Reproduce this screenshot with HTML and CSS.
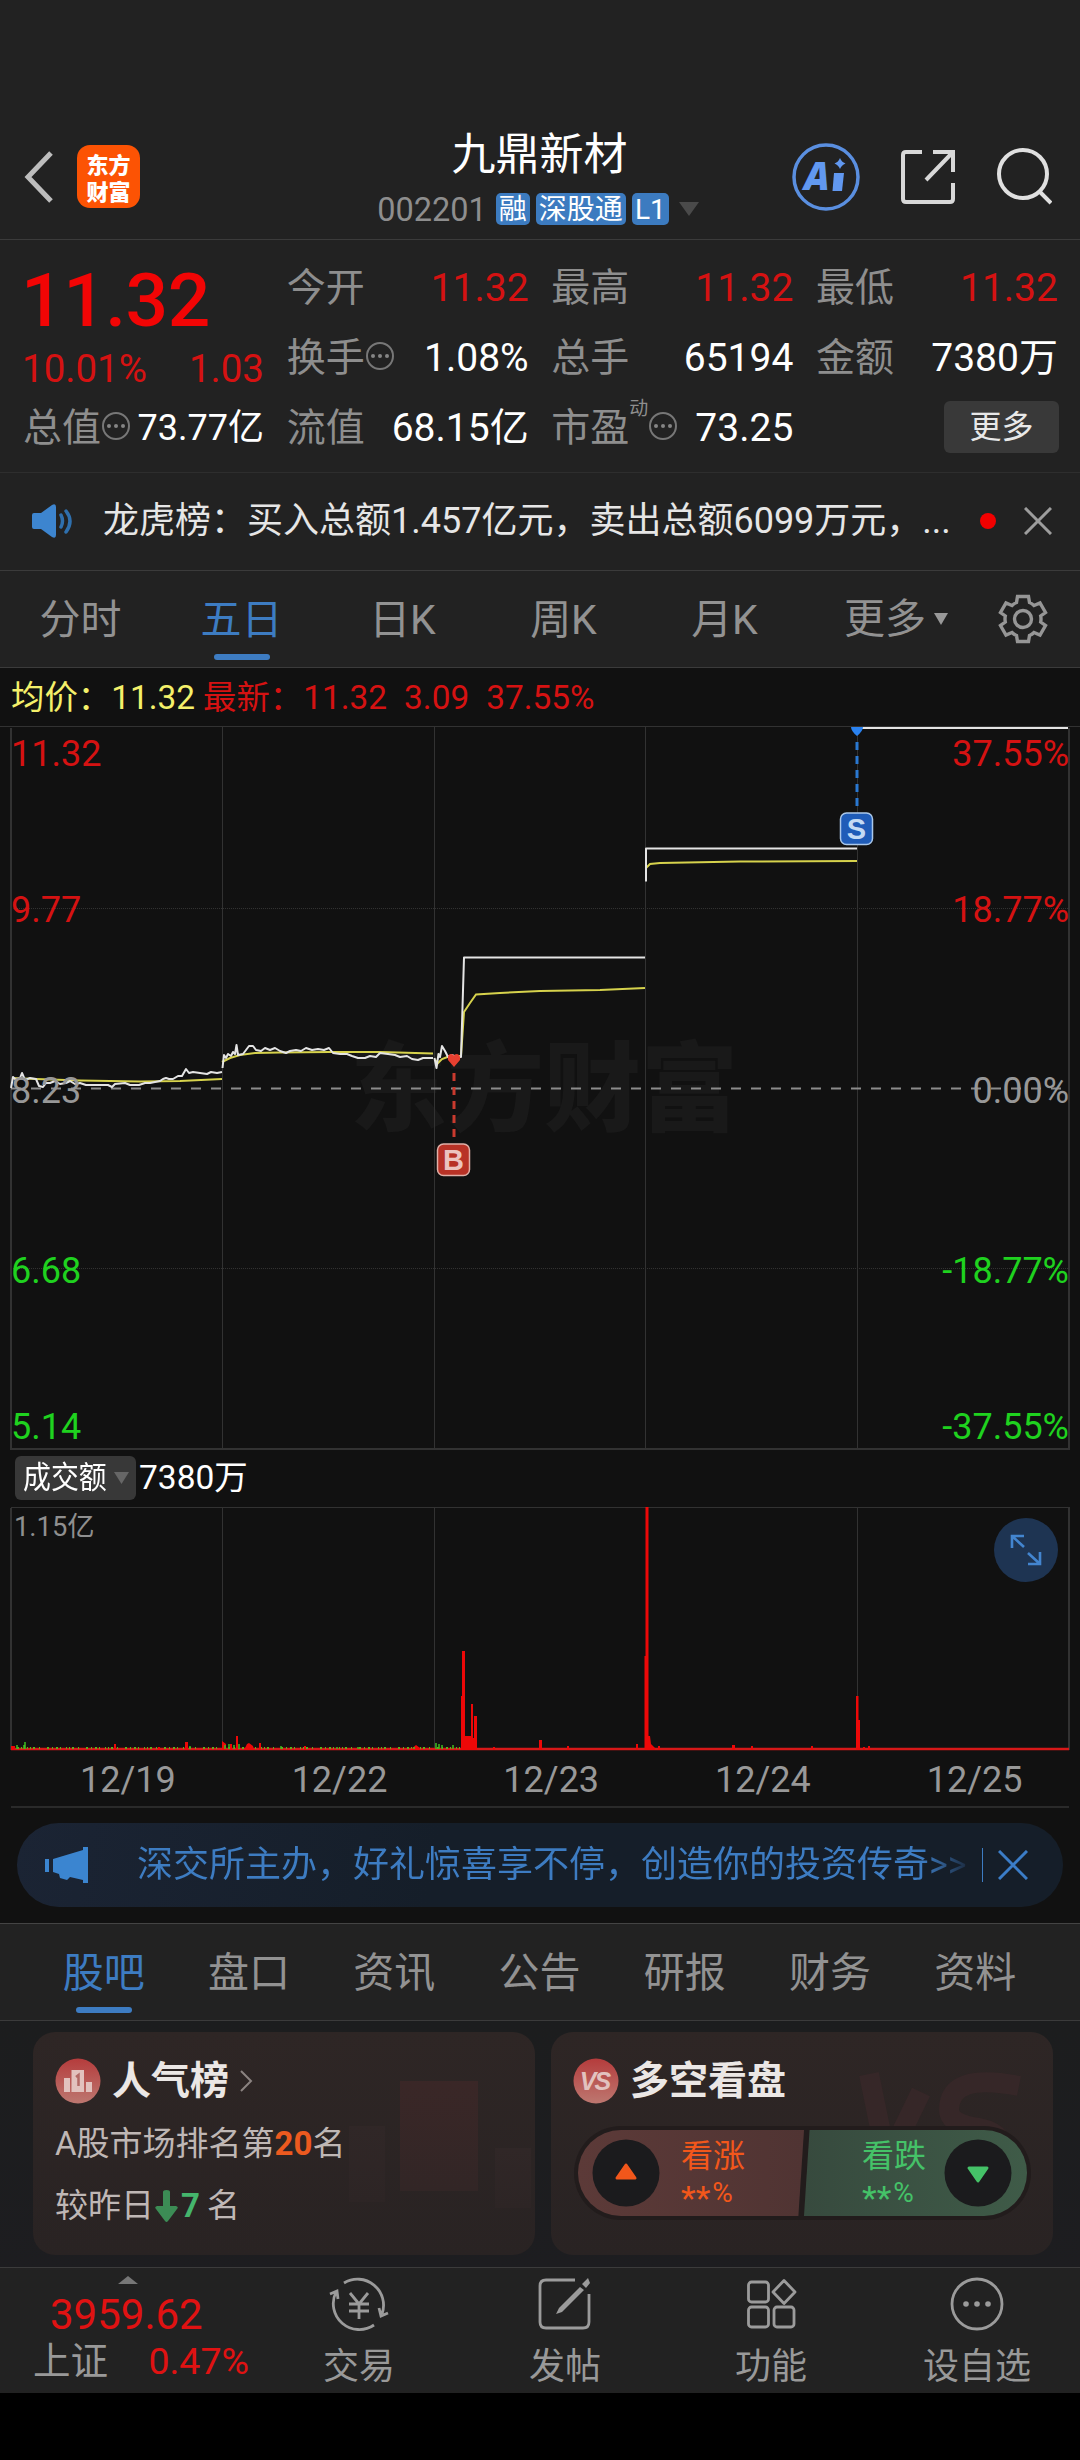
FILE: index.html
```html
<!DOCTYPE html>
<html lang="zh-CN">
<head>
<meta charset="utf-8">
<title>九鼎新材 002201</title>
<link rel="stylesheet" href="styles.css">
</head>
<body>
<div class="app">
  <header class="header">
    <div class="header-left">
      <svg class="back" width="32" height="54" viewBox="0 0 32 54"><path d="M28 3 5 27 28 51" fill="none" stroke="#bdbdbd" stroke-width="5"/></svg>
      <div class="logo"><span>东方</span><span>财富</span></div>
    </div>
    <div class="header-title">
      <h1>九鼎新材</h1>
      <div class="code-row">
        <span class="code">002201</span>
        <span class="tag tag-one">融</span>
        <span class="tag tag-three">深股通</span>
        <span class="tag tag-level">L1</span>
        <svg class="code-arrow" width="20" height="14" viewBox="0 0 20 14"><path d="M0 0H20L10 14Z" fill="#4a4a4a"/></svg>
      </div>
    </div>
    <div class="header-actions">
      <svg width="68" height="68" viewBox="0 0 68 68"><circle cx="34" cy="34" r="32" fill="none" stroke="#5a8fe0" stroke-width="3.5"/><text class="ai-text" x="12" y="47">A</text><path d="M42 30h10l-2 18h-9.500z" fill="#6198f0"/><path d="M48 15q1.500 4 5.500 5.500-4 1.500-5.500 5.500-1.500-4-5.500-5.500 4-1.500 5.500-5.500z" fill="#6198f0"/></svg>
      <svg width="56" height="56" viewBox="0 0 56 56" fill="none" stroke="#d8d8d8" stroke-width="4"><path d="M22 3H6Q3 3 3 6V50Q3 53 6 53H50Q53 53 53 50V34M33 3H53V23M53 3 26 31"/></svg>
      <svg width="56" height="58" viewBox="0 0 56 58" fill="none" stroke="#e0e0e0" stroke-width="4"><circle cx="27" cy="26" r="24"/><path d="M43 43 55 55"/></svg>
    </div>
  </header>

  <section class="quote">
    <div class="quote-main">
      <div class="price">11.32</div>
      <div class="change"><span>10.01%</span><span>1.03</span></div>
      <div class="cell"><span class="label">总值<i class="info"><b></b><b></b><b></b></i></span><span class="fit">73.77亿</span></div>
    </div>
    <div class="quote-col">
      <div class="cell"><span class="label">今开</span><span class="up">11.32</span></div>
      <div class="cell"><span class="label">换手<i class="info"><b></b><b></b><b></b></i></span><span>1.08%</span></div>
      <div class="cell"><span class="label">流值</span><span>68.15亿</span></div>
    </div>
    <div class="quote-col">
      <div class="cell"><span class="label">最高</span><span class="up">11.32</span></div>
      <div class="cell"><span class="label">总手</span><span>65194</span></div>
      <div class="cell"><span class="label">市盈<sup>动</sup><i class="info"><b></b><b></b><b></b></i></span><span>73.25</span></div>
    </div>
    <div class="quote-col">
      <div class="cell"><span class="label">最低</span><span class="up">11.32</span></div>
      <div class="cell"><span class="label">金额</span><span>7380万</span></div>
      <div class="cell cell-end"><button class="more">更多</button></div>
    </div>
  </section>

  <section class="news">
    <svg width="42" height="34" viewBox="0 0 42 34"><path d="M0 11Q0 9 2 9H9L20 1Q24-1 24 3V31Q24 35 20 33L9 25H2Q0 25 0 23Z" fill="#3d85cf"/><path d="M29 11Q32 17 29 23M34 7Q42 17 34 28" fill="none" stroke="#2f70ae" stroke-width="3.500" stroke-linecap="round"/></svg>
    <p>龙虎榜：买入总额1.457亿元，卖出总额6099万元，...</p>
    <i class="dot"></i>
    <svg width="28" height="28" viewBox="0 0 28 28"><path d="M1 1 27 27M27 1 1 27" stroke="#9d9d9d" stroke-width="3"/></svg>
  </section>

  <nav class="periods">
    <span>分时</span><span class="active">五日</span><span>日K</span><span>周K</span><span>月K</span>
    <span class="period-more">更多<svg width="14" height="12" viewBox="0 0 14 12"><path d="M0 0H14L7 12Z" fill="#999"/></svg></span>
    <svg class="gear" width="50" height="50" viewBox="-25 -25 50 50" fill="none" stroke="#969696" stroke-width="3.400"><path d="M-5.500-22.500H5.500L6.500-16.500Q9-15.500 11-13.500L17-16 22.500-6.500 17.700-3Q18.300 0 17.700 3L22.500 6.500 17 16 11 13.500Q9 15.500 6.500 16.500L5.500 22.500H-5.500L-6.500 16.500Q-9 15.500-11 13.500L-17 16-22.500 6.500-17.700 3Q-18.300 0-17.700-3L-22.500-6.500-17-16-11-13.500Q-9-15.500-6.500-16.500Z"/><circle r="8.500"/></svg>
  </nav>

  <section class="chart">
    <div class="legend"><span class="avg">均价：11.32</span><span>最新：11.32</span><span>3.09</span><span>37.55%</span></div>
    <svg class="price-chart" width="1080" height="725" viewBox="0 726 1080 725">
      <text class="watermark" x="350" y="1123" textLength="388">东方财富</text>
      <g class="grid">
        <path d="M0 726.500H1080"/>
        <path d="M222.500 727V1449M434.500 727V1449M645.500 727V1449M857.500 727V1449"/>
        <path d="M11 728V1450M1069 728V1450M11 1449H1070" stroke-width="2"/>
        <path d="M11 908.500H1069M11 1268.500H1069" stroke-dasharray="1 1"/>
      </g>
      <path d="M11 1088.500H1069" stroke="#8c8c8c" stroke-width="2" stroke-dasharray="10 10"/>
      <g class="avg-line">
        <path d="M12 1078 36 1079 80 1080.500 140 1081.500 180 1081 222 1079"/>
        <path d="M222 1062 230 1058 240 1055 255 1053 280 1052.500 330 1052 380 1052 433 1053.500"/>
        <path d="M435 1060 438 1063 442 1059 450 1056 461 1056 464 1012 470 1003 476 994.500 500 993 540 991 600 990 645 988"/>
        <path d="M646 868 650 864 660 863 740 861.500 857 861"/>
      </g>
      <g class="price-line">
        <path d="M11 1088 13 1077 16 1080 20 1078 22 1073 25 1080 30 1078 36 1079 39 1086 43 1087 46 1083 50 1083 55 1081 60 1084 66 1083 70 1081 75 1084 80 1083 86 1085 95 1085 108 1085 112 1087 115 1084 125 1083 130 1085 139 1085 145 1083 150 1083 155 1082 160 1081 163 1079 166 1078 169 1079 173 1079 178 1076 182 1076 186 1069 189 1073 193 1072 200 1073 207 1074 211 1072 217 1073 222 1072"/>
        <path d="M222.500 1068 224 1055 226 1058 228 1054 231 1056 233 1052 235 1054 236.500 1045 238 1055 243 1054 246 1050 249 1046 253 1046 256 1050 261 1051 265 1048 270 1050 275 1048 280 1051 286 1053 290 1051 296 1050 301 1051 306 1048 312 1050 318 1049 324 1050 329 1048 333 1053 340 1054 347 1054 352 1056 358 1058 365 1058 370 1056 376 1057 380 1053 388 1054 395 1055 400 1057 407 1056 412 1059 418 1060 423 1058 433 1058"/>
        <path d="M434.500 1058 436.500 1068 438.500 1054 440 1057 442 1046 445 1051 448 1057 452 1055 456 1057 461 1057 464 957.500 645 957.500"/>
        <path d="M646 881.500V848.500H857"/>
        <path d="M858 728H1068" stroke-width="2.200"/>
      </g>
      <g class="axis">
        <g class="rise"><text x="11" y="766">11.32</text><text x="11" y="922">9.77</text></g>
        <text x="11" y="1103">8.23</text>
        <g class="fall"><text x="11" y="1283">6.68</text><text x="11" y="1439">5.14</text></g>
        <g text-anchor="end">
          <g class="rise"><text x="1069" y="766">37.55%</text><text x="1069" y="922">18.77%</text></g>
          <text x="1069" y="1103">0.00%</text>
          <g class="fall"><text x="1069" y="1283">-18.77%</text><text x="1069" y="1439">-37.55%</text></g>
        </g>
      </g>
      <path d="M454 1073V1138" stroke="#c93a2e" stroke-width="3" stroke-dasharray="8 6"/>
      <path d="M454 1067 448 1060Q447 1054 451 1054 454 1054 454 1056 454 1054 457 1054 461 1055 460 1060Z" fill="#e84030"/>
      <rect x="437.500" y="1144" width="32" height="31.500" rx="6" fill="#b83226" stroke="#e0b0a8" stroke-width="1.500"/>
      <text class="marker" x="453.500" y="1170">B</text>
      <path d="M857 742V810" stroke="#2a78d0" stroke-width="3" stroke-dasharray="8 6"/>
      <path d="M851 727H863Q863 731 857 736 851 731 851 727Z" fill="#2a82f0"/>
      <rect x="840.500" y="813" width="32" height="31.500" rx="6" fill="#1f5cb8" stroke="#aac8ea" stroke-width="1.500"/>
      <text class="marker marker-sell" x="856.500" y="839">S</text>
    </svg>
    <div class="volume-head">
      <span class="volume-select"><em>成交额</em><svg width="15" height="12" viewBox="0 0 15 12"><path d="M0 0H15L7.500 12Z" fill="#666"/></svg></span>
      <span>7380万</span>
    </div>
    <svg class="volume-chart" width="1080" height="244" viewBox="0 1507 1080 244">
      <g class="grid">
        <path d="M11 1507.500H1070M222.500 1508V1749M434.500 1508V1749M857.500 1508V1749"/>
        <path d="M11 1508V1750M1069 1508V1750" stroke-width="2"/>
      </g>
      <text class="volume-max" x="14" y="1536">1.15亿</text>
      <path d="M11 1749H1069" stroke="#d81818" stroke-width="2.500"/>
      <path d="M13 1748H461" stroke="#5fae1c" stroke-width="2" stroke-dasharray="1 3 2 2 1 5 1 2 1 2 2 4 1 7 2 3"/>
      <path d="M11 1750V1746H15V1750ZM114 1750V1744H116V1750ZM158 1750V1747H160V1750ZM185 1750V1742H188V1750ZM222 1750V1741L226 1744V1750ZM236 1750V1736H238V1750ZM230 1750V1744H232V1750ZM244 1750 247 1744 249 1743 253 1746 254 1750ZM259 1750V1743H261V1750ZM304 1750V1746H306V1750ZM410 1750 416 1745 420 1748V1750ZM461 1750V1696H462V1651H465V1736H471V1704H473V1738H474V1716H477V1750ZM493 1750V1747H495V1750ZM539 1750V1740H542V1750ZM567 1750V1746H569V1750ZM636 1750V1744H638V1750ZM644.500 1750V1656H645.500V1507H648.500V1736H650L651 1744 655 1748V1750ZM658 1750V1746H660V1750ZM732 1750V1745H735V1750ZM751 1750V1746H753V1750ZM811 1750V1746H813V1750ZM856 1750V1696H858.500V1720H860V1750ZM863 1750V1747H865V1750ZM868 1750V1746H870V1750Z" fill="#ed0808"/>
      <path d="M17 1749V1745M24 1749V1745M25 1749V1742M190 1749V1746M225 1749V1745M229 1749V1744M234 1749V1745M239 1749V1744M281 1749V1746M337 1749V1747M358 1749V1747M414 1749V1747M436 1749V1743M439 1749V1744M442 1749V1745M453 1749V1745" stroke="#3fbe20" stroke-width="1.500"/>
      <circle cx="1026" cy="1550" r="32" fill="#1e3452"/>
      <path d="M1012 1548V1536H1024M1012 1536 1024 1547M1040 1552V1564H1028M1040 1564 1028 1553" fill="none" stroke="#4385cf" stroke-width="2.600"/>
    </svg>
    <div class="dates"><span>12/19</span><span>12/22</span><span>12/23</span><span>12/24</span><span>12/25</span></div>
  </section>

  <section class="promo-wrap">
    <div class="promo">
      <svg width="43" height="36" viewBox="0 0 43 36"><path d="M0 12H4V25H0ZM8 12 38 3V0H43V36H38V33L25 30 22 33 15 31 14 27 8 25Z" fill="#3b85d0"/></svg>
      <p>深交所主办，好礼惊喜享不停，创造你的投资传奇&gt;&gt;</p>
      <i></i>
      <svg width="30" height="30" viewBox="0 0 30 30"><path d="M1 1 29 29M29 1 1 29" stroke="#3b7dc8" stroke-width="3"/></svg>
    </div>
  </section>

  <nav class="sections">
    <span class="active">股吧</span><span>盘口</span><span>资讯</span><span>公告</span><span>研报</span><span>财务</span><span>资料</span>
  </nav>

  <section class="cards">
    <article class="card card-rank">
      <h2><svg width="46" height="46" viewBox="0 0 46 46"><defs><linearGradient id="badge" x1="0" y1="0" x2="0" y2="1"><stop offset="0" stop-color="#b53c3c"/><stop offset="1" stop-color="#bd7770"/></linearGradient></defs><circle cx="23" cy="23" r="22.500" fill="url(#badge)"/><path d="M9 20H15V34H9ZM16.500 12H29V34H16.500ZM31 24H37V34H31Z" fill="#e2c2be"/><path d="M21 19 23.500 17V28" fill="none" stroke="#b36a66" stroke-width="2.500"/></svg>人气榜<svg width="13" height="22" viewBox="0 0 13 22"><path d="M1 1 11 11 1 21" fill="none" stroke="#8b8381" stroke-width="2"/></svg></h2>
      <p>A股市场排名第<b class="rank">20</b>名</p>
      <p>较昨日<svg class="drop" width="23" height="32" viewBox="0 0 23 32"><path d="M8 2Q8 0 11.500 0T15 2V16H21Q24 17 22 19L13 31Q11.500 33 10 31L1 19Q-1 17 2 16H8Z" fill="#3c8c55"/></svg><b class="fell">7</b>名</p>
    </article>
    <article class="card card-vote">
      <svg class="card-art" width="180" height="110" viewBox="0 0 180 110" fill="none" stroke="#362728" stroke-width="20"><path d="M10 12 28 100 62 30M160 24Q90 10 90 48 90 62 120 66 150 72 140 96"/></svg>
      <h2><svg width="46" height="46" viewBox="0 0 46 46"><circle cx="23" cy="23" r="22.500" fill="url(#badge)"/><text class="vs" x="21.500" y="32">VS</text></svg>多空看盘</h2>
      <div class="vote">
        <div class="side bull">
          <svg width="68" height="68" viewBox="0 0 68 68"><circle cx="34" cy="34" r="33.500" fill="#1b1b1d"/><path d="M34 26 43 39H25Z" fill="#f2571b" stroke="#f2571b" stroke-width="3" stroke-linejoin="round"/></svg>
          <div><span>看涨</span><small><i>**</i>%</small></div>
        </div>
        <div class="side bear">
          <div><span>看跌</span><small><i>**</i>%</small></div>
          <svg width="68" height="68" viewBox="0 0 68 68"><circle cx="34" cy="34" r="33.500" fill="#1b1b1d"/><path d="M34 42 43 29H25Z" fill="#45c268" stroke="#45c268" stroke-width="3" stroke-linejoin="round"/></svg>
        </div>
      </div>
    </article>
  </section>

  <footer class="bottom">
    <div class="index">
      <svg width="20" height="8" viewBox="0 0 20 8"><path d="M0 8 10 0 20 8Z" fill="#777"/></svg>
      <strong>3959.62</strong>
      <div><span>上证</span><b>0.47%</b></div>
    </div>
    <div class="action"><svg width="60" height="56" viewBox="0 0 60 56" fill="none" stroke="#9b9b9b" stroke-width="2.800"><path d="M15 7A26 26 0 0 1 53 38M45 49A26 26 0 0 1 7 16M1 18 8 15 9 23M59 37 52 40 50 32"/><path d="M21 17 30 28 39 17M30 28V43M20 28H40M20 35H40"/></svg><span>交易</span></div>
    <div class="action"><svg width="60" height="56" viewBox="0 0 60 56"><path d="M40 4H11Q5 4 5 10V46Q5 52 11 52H48Q54 52 54 46V18" fill="none" stroke="#9b9b9b" stroke-width="2.800"/><path d="M45 11 49 14 27 36 21 38 24 32ZM47 8 53 2 55 7 51 12Z" fill="#9b9b9b"/></svg><span>发帖</span></div>
    <div class="action"><svg width="60" height="56" viewBox="0 0 60 56" fill="none" stroke="#9b9b9b" stroke-width="2.800"><rect x="7.500" y="6" width="20" height="20" rx="3"/><rect x="7.500" y="31" width="20" height="20" rx="3"/><rect x="33" y="31" width="20" height="20" rx="3"/><path d="M43 4.500 54 16 43 27.500 32 16Z" stroke-linejoin="round"/></svg><span>功能</span></div>
    <div class="action"><svg width="60" height="56" viewBox="0 0 60 56"><circle cx="30" cy="28" r="25" fill="none" stroke="#9b9b9b" stroke-width="2.800"/><g fill="#9b9b9b"><circle cx="19" cy="28" r="2.800"/><circle cx="30" cy="28" r="2.800"/><circle cx="41" cy="28" r="2.800"/></g></svg><span>设自选</span></div>
  </footer>
</div>
</body>
</html>
```
FILE: styles.css
```css
* { box-sizing: border-box; margin: 0; padding: 0; }
body { background: #000; }
i, em { font-style: normal; }
svg { display: block; flex: none; }
.app {
  width: 1080px; height: 2460px; overflow: hidden; background: #000; color: #fff;
  font-family: Roboto, "Noto Sans CJK SC", sans-serif; font-weight: 400; white-space: nowrap;
}

/* title bar */
.header {
  height: 240px; padding: 114px 28px 0 23px; background: #222; border-bottom: 1px solid #3b3b3b;
  display: grid; grid-template-columns: 353px 324px 1fr; align-items: center;
}
.header-left { display: flex; align-items: center; gap: 22px; }
.logo {
  width: 63px; height: 63px; border-radius: 13px; background: #fc5304;
  display: flex; flex-direction: column; align-items: center; justify-content: center;
  font: 900 22px/27px "Noto Sans CJK SC", sans-serif;
}
.header-title { display: flex; flex-direction: column; align-items: center; }
h1 { font-size: 44px; font-weight: 400; line-height: 58px; padding: 6px 0 0 3px; }
.code-row { display: flex; align-items: center; height: 50px; }
.code { font-size: 32.500px; color: #8e8e8e; margin-right: 9px; padding-top: 2px; }
.tag {
  height: 32px; border-radius: 5px; background: #3c7bc0; margin-right: 6px;
  font-size: 28px; line-height: 33px; text-align: center;
}
.tag-one { width: 34px; }
.tag-three { width: 90px; }
.tag-level { width: 37px; margin-right: 10px; }
.header-actions { display: flex; align-items: center; justify-content: flex-end; gap: 40px; }
.header-actions svg { position: relative; }
.ai-text { font: italic 900 38px "Noto Sans", sans-serif; fill: #6198f0; }

/* quote */
.quote {
  height: 232px; padding: 13px 22px 0 23px; background: #222;
  display: grid; grid-template-columns: 241px 242px 242px 242px; justify-content: space-between;
}
.cell { height: 70px; display: flex; align-items: center; justify-content: space-between; font-size: 39px; }
.cell .label { color: #8e8e8e; display: flex; align-items: center; }
.cell span { line-height: 70px; }
.cell .fit { font-size: 36px; }
.up { color: #d51212; }
.price { height: 92px; font-size: 75px; font-weight: 500; line-height: 94px; color: #f20505; letter-spacing: -.5px; margin-left: -2px; }
.change { height: 48px; display: flex; justify-content: space-between; font-size: 38.500px; line-height: 48px; color: #d51212; margin-left: -1px; }
.info {
  flex: none; width: 28px; height: 28px; border: 2px solid #777; border-radius: 50%; margin: -5px 0 0 1px;
  display: flex; align-items: center; justify-content: center; gap: 3px;
}
.info b { width: 4px; height: 4px; border-radius: 50%; background: #858585; }
sup { font-size: 19px; line-height: 20px; align-self: flex-start; margin-top: 6px; }
.cell-end { justify-content: flex-end; }
.more {
  width: 115px; height: 52px; border: 0; border-radius: 6px; background: #393939; color: #e8e8e8;
  font: 32px/50px Roboto, "Noto Sans CJK SC", sans-serif; margin: -2px -1px 0 0;
}

/* news strip */
.news {
  height: 99px; padding: 0 28px 2px 32px; background: #222; border-top: 1px solid #2e2e2e; border-bottom: 1px solid #3b3b3b;
  display: flex; align-items: center; color: #e6e6e6;
}
.news p { width: 876px; padding-left: 29px; font-size: 36px; line-height: 60px; }
.dot { flex: none; width: 16px; height: 16px; border-radius: 50%; background: #f20000; margin: 0 auto 0 30px; }

/* chart periods */
.periods {
  height: 97px; background: #222; border-bottom: 1px solid #3b3b3b; color: #929292; font-size: 41px; line-height: 98px;
  display: flex; align-items: stretch;
}
.periods span { width: 161px; text-align: center; position: relative; }
.periods .period-more { width: 174px; display: flex; align-items: center; gap: 8px; padding-left: 39px; }
.gear { align-self: center; margin-left: 19px; }
.active { color: #3d7cc2; }
.active::after {
  content: ""; position: absolute; left: 50%; bottom: 7px; width: 56px; height: 6px; margin-left: -28px;
  border-radius: 3px; background: #3d7cc2;
}

/* chart */
.chart { background: #111; }
.legend {
  height: 58px; padding-left: 11px; display: flex; font-size: 33.400px; line-height: 60px; color: #d51212;
}
.legend span { margin-right: 17px; }
.legend .avg { color: #f4f06a; margin-right: 8px; }
.grid { fill: none; stroke: #323232; }
.watermark { font: 900 97px "Noto Sans CJK SC", sans-serif; fill: #191919; }
.avg-line { fill: none; stroke: #d6d24c; stroke-width: 2; }
.price-line { fill: none; stroke: #e4e4e4; stroke-width: 2; stroke-linejoin: round; }
.axis { font-size: 36px; fill: #989898; }
.rise { fill: #d51212; }
.fall { fill: #1fd21f; }
.marker { font: 700 29px "Liberation Sans", sans-serif; fill: #ecc4bf; text-anchor: middle; }
.marker-sell { fill: #c4daf4; }
.volume-head { height: 56px; padding: 0 0 2px 15px; display: flex; align-items: center; gap: 3px; font-size: 33.500px; line-height: 50px; }
.volume-select {
  width: 121px; height: 44px; border-radius: 6px; background: #383838; padding: 0 7px 0 8px;
  display: flex; align-items: center; justify-content: space-between; line-height: 42px; font-size: 31px;
}
.volume-select em { width: 84px; transform: scaleX(.9); transform-origin: left; }
.volume-max { font-size: 27.300px; fill: #8f8f8f; }
.dates {
  height: 57px; margin: 0 11px; border-bottom: 2px solid #2a2a2a; padding-left: 11px;
  display: flex; font-size: 36px; line-height: 58px; color: #989898;
}
.dates span { flex: 0 0 211.7px; text-align: center; }

/* promo */
.promo-wrap { background: #111; height: 116px; padding: 15px 17px 0; border-bottom: 1px solid #444; }
.promo {
  height: 84px; border-radius: 42px; background: linear-gradient(100deg, #1b2434, #151e29 40%, #151e29); padding: 0 35px 0 28px;
  display: flex; align-items: center; color: #3d7cc2;
}
.promo p {
  flex: none; width: 890px; padding-left: 49px; font-size: 36px; line-height: 62px;
  background: linear-gradient(90deg, #3d7cc2 835px, #1a2739 882px); -webkit-background-clip: text; color: transparent;
}
.promo i { flex: none; width: 1px; height: 34px; background: #3d7cc2; margin: 0 15px 0 auto; }

/* section tabs */
.sections {
  height: 97px; padding: 0 32px 0 31px; background: #222; border-bottom: 1px solid #3b3b3b; display: flex;
  font-size: 41px; line-height: 98px; color: #929292;
}
.sections span { flex: 1; text-align: center; position: relative; }

/* cards */
.cards { height: 246px; padding: 11px 27px 0 33px; background: linear-gradient(#1c1d1e, #1d1d20); display: flex; justify-content: space-between; }
.card { position: relative; width: 502px; height: 223px; border-radius: 22px; padding: 20px 22px 0; background: linear-gradient(#2e2625, #292323); }
.card-rank {
  background: linear-gradient(#3a2727, #322626) 367px 49px / 78px 110px no-repeat,
    linear-gradient(#302727, #2d2525) 316px 94px / 36px 76px no-repeat,
    linear-gradient(#302727, #2d2525) 462px 116px / 36px 60px no-repeat,
    linear-gradient(#2e2625, #292323);
}
.card-art { position: absolute; right: 14px; top: 30px; }
.card h2 { height: 58px; display: flex; align-items: center; gap: 11px; font-size: 39px; line-height: 54px; font-weight: 700; color: #ebe7e5; position: relative; }
.card p { display: flex; align-items: center; height: 62px; font-size: 33px; line-height: 62px; color: #bfb7b5; padding-top: 6px; }
.rank { color: #ec5a1f; font-size: 33px; }
.drop { margin: 0 3px 0 1px; }
.fell { color: #45b56c; margin-right: 7px; }
.vs { font: italic 700 25px "Liberation Sans", sans-serif; fill: #e2c2be; text-anchor: middle; letter-spacing: -2px; }
.vote {
  position: relative; width: 457px; height: 94px; margin: 16px 0 0 1px; border-radius: 47px; background: #221c1c; padding: 4px; display: flex; overflow: hidden;
}
.side { display: flex; align-items: center; height: 86px; line-height: 1; }
.bull { width: 226px; border-radius: 43px 0 0 43px; background: linear-gradient(90deg, #5c3a38, #503433); color: #f2571b; clip-path: polygon(0 0, 100% 0, 97.5% 100%, 0 100%); padding-left: 14px; gap: 21px; }
.bear { width: 223px; border-radius: 0 43px 43px 0; background: linear-gradient(90deg, #374a3e, #3f5b48); color: #45c268; clip-path: polygon(2.500% 0, 100% 0, 100% 100%, 0 100%); padding-left: 58px; gap: 18px; }
.side div { display: flex; flex-direction: column; }
.side span { font-size: 32px; line-height: 38px; padding-top: 1px; }
.side small { font-size: 28px; line-height: 36px; }
.side small i { display: inline-block; font-size: 34px; line-height: 20px; vertical-align: -8px; margin-right: 2px; }

/* bottom bar */
.bottom { height: 126px; background: #222; border-top: 1px solid #3b3b3b; display: flex; color: #999; }
.index { width: 255px; padding: 8px 0 0 33px; }
.index svg { margin-left: 85px; }
.index strong { display: block; font-weight: 400; font-size: 42px; line-height: 50px; color: #e01212; margin: 6px 0 0 17px; height: 46px; }
.index div { display: flex; justify-content: space-between; width: 216px; font-size: 37.500px; line-height: 50px; }
.index b { font-weight: 400; color: #e01212; }
.action { width: 206px; display: flex; flex-direction: column; align-items: center; padding: 8px 0 0 2px; font-size: 36px; }
.action span { line-height: 50px; margin-top: 10px; }
```
